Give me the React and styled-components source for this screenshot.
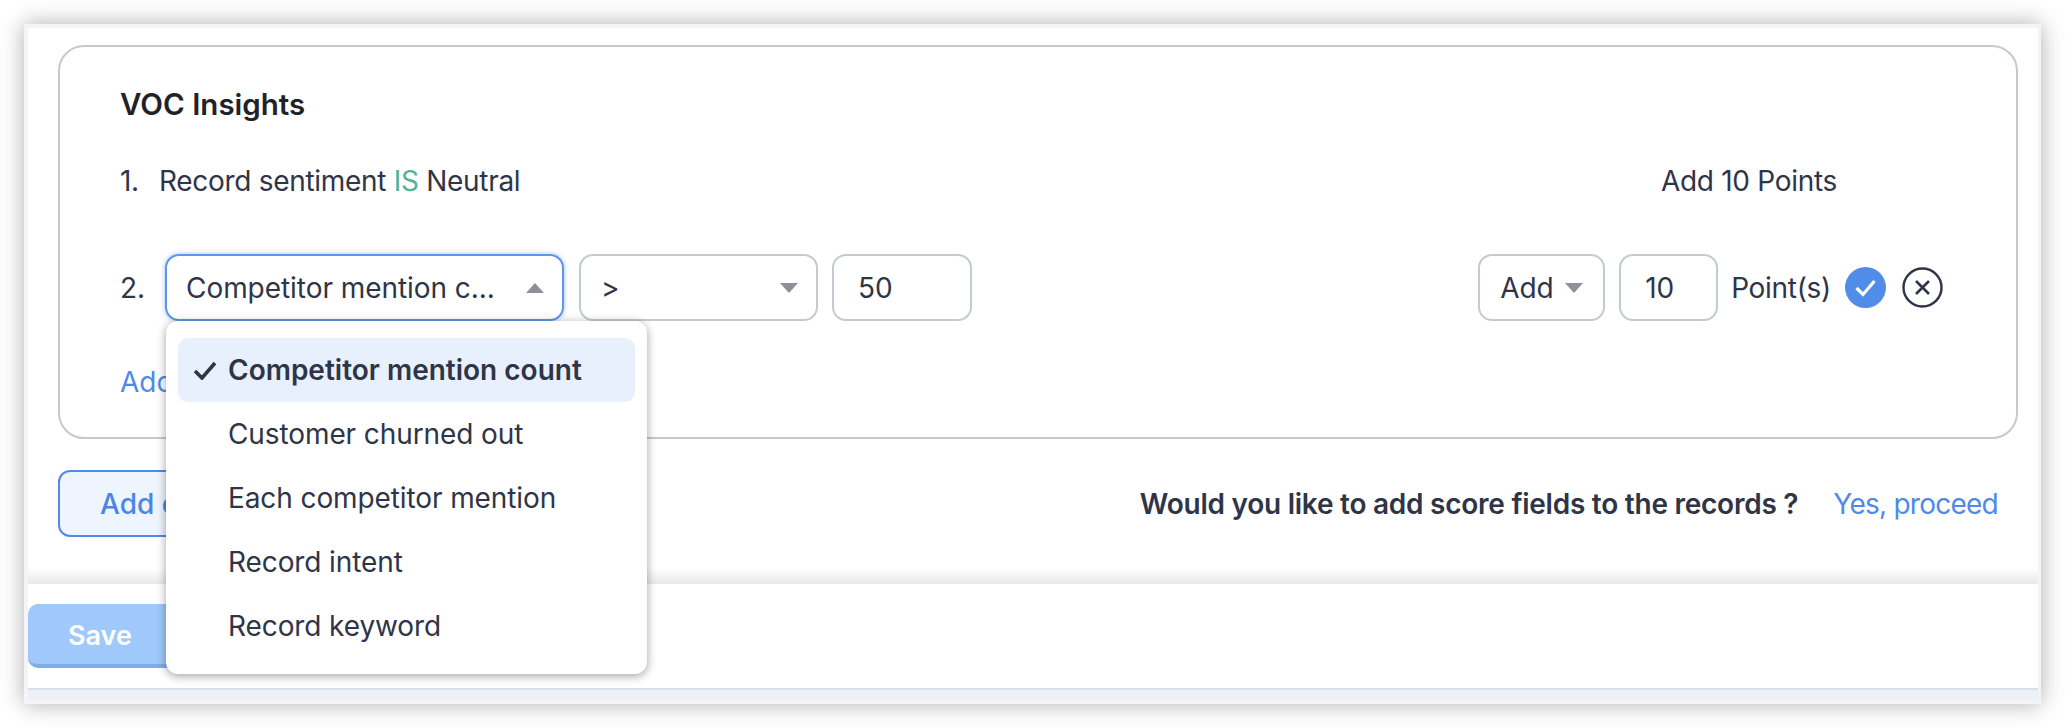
import React from 'react';
import styled, { createGlobalStyle } from 'styled-components';

const GlobalStyle = createGlobalStyle`
  html, body {
    margin: 0;
    padding: 0;
    background: #fff;
    font-family: "Inter", "Noto Sans", sans-serif;
    color: #2f3547;
  }
`;

const Page = styled.div`
  width: 2066px;
  height: 728px;
  padding: 24px 25px 24px 24px;
  box-sizing: border-box;
  overflow: hidden;
`;

const Frame = styled.div`
  height: 680px;
  box-sizing: border-box;
  padding: 4px 3px 4px 4px;
  background: #f4f4f4;
  box-shadow: 0 0 22px rgba(0, 0, 0, 0.32);
  display: flex;
  flex-direction: column;
`;

const Body = styled.div`
  height: 556px;
  box-sizing: border-box;
  padding: 17px 20px 0 30px;
  background: #fff;
  position: relative;
  &::after {
    content: '';
    position: absolute;
    left: 0;
    right: 0;
    bottom: 0;
    height: 16px;
    background: linear-gradient(to bottom, rgba(0, 0, 0, 0), rgba(0, 0, 0, 0.09));
  }
`;

const Card = styled.section`
  height: 394px;
  box-sizing: border-box;
  border: 2px solid #c5c9ce;
  border-radius: 26px;
  padding: 37px 73px 0 60px;
`;

const Title = styled.h2`
  margin: 0;
  font-size: 29.5px;
  line-height: 40px;
  font-weight: 600;
  color: #1f2229;
`;

const Row = styled.div`
  display: flex;
  align-items: center;
  height: ${(p) => p.$height}px;
  margin-top: ${(p) => p.$top}px;
  font-size: 28px;
  letter-spacing: ${(p) => (p.$tight ? '-0.3px' : '-0.05px')};
`;

const Num = styled.span`
  width: ${(p) => p.$width}px;
  flex: none;
`;

const Sentence = styled.span`
  flex: 1;
`;

const Op = styled.span`
  color: #4fb39c;
`;

const Score = styled.span`
  margin-right: 106px;
`;

const Field = styled.div`
  position: relative;
  flex: none;
  box-sizing: border-box;
  width: ${(p) => p.$width}px;
  height: 67px;
  margin-right: ${(p) => p.$gap || 0}px;
  padding: 0 ${(p) => p.$padRight || 18}px 0 ${(p) => p.$padLeft || 20}px;
  display: flex;
  align-items: center;
  justify-content: space-between;
  background: #fff;
  border: 2px solid ${(p) => (p.$focus ? '#5f96ea' : '#c5cad0')};
  border-radius: 14px;
  box-shadow: ${(p) => (p.$focus ? '0 0 5px rgba(80, 140, 235, 0.55)' : 'none')};
  white-space: nowrap;
`;

const Arrow = styled.i`
  flex: none;
  width: 0;
  height: 0;
  border-left: 9px solid transparent;
  border-right: 9px solid transparent;
  ${(p) => (p.$up ? 'border-bottom' : 'border-top')}: 10px solid #8d9098;
`;

const Spacer = styled.div`
  flex: 1;
`;

const Unit = styled.span`
  margin-right: 14px;
  letter-spacing: -0.3px;
`;

const IconSlot = styled.span`
  display: flex;
  flex: none;
  margin-right: ${(p) => p.$gap || 0}px;
`;

const AddLink = styled.a`
  display: block;
  margin-top: 41px;
  font-size: 28px;
  line-height: 40px;
  color: #4f8ae8;
`;

const ActionRow = styled.div`
  display: flex;
  align-items: center;
  margin-top: 31px;
  height: 67px;
`;

const OutlineButton = styled.button`
  width: 300px;
  height: 67px;
  box-sizing: border-box;
  padding: 0 0 0 40px;
  text-align: left;
  font: 500 28px "Inter", sans-serif;
  color: #4a86e6;
  background: #eef5fe;
  border: 2px solid #4f8ae8;
  border-radius: 12px;
  white-space: nowrap;
`;

const Question = styled.span`
  margin-left: auto;
  font-size: 28px;
  font-weight: 600;
  letter-spacing: -0.25px;
  color: #2f3547;
`;

const Proceed = styled.a`
  margin-left: 35px;
  margin-right: 20px;
  font-size: 28px;
  letter-spacing: -0.75px;
  color: #4f8ae8;
`;

const Footer = styled.footer`
  height: 106px;
  box-sizing: border-box;
  padding-top: 20px;
  background: #fff;
  border-bottom: 2px solid #d6e0eb;
`;

const SaveButton = styled.button`
  width: 180px;
  height: 64px;
  box-sizing: border-box;
  padding: 2px 0 0 40px;
  text-align: left;
  font: 600 27px "Inter", sans-serif;
  color: #fff;
  background: #9fc9fa;
  border: 0;
  border-bottom: 4px solid #80ade8;
  border-radius: 10px;
`;

const StatusBar = styled.div`
  flex: 1;
  background: #edf0f4;
`;

const Menu = styled.ul`
  position: absolute;
  left: 142px;
  top: 297px;
  z-index: 5;
  width: 481px;
  height: 353px;
  box-sizing: border-box;
  margin: 0;
  padding: 17px 12px;
  list-style: none;
  background: #fff;
  border-radius: 12px;
  box-shadow: 0 2px 10px rgba(0, 0, 0, 0.38);
`;

const Option = styled.li`
  display: flex;
  align-items: center;
  height: 64px;
  padding-left: 50px;
  position: relative;
  font-size: 28px;
  font-weight: ${(p) => (p.$selected ? 600 : 400)};
  letter-spacing: ${(p) => (p.$selected ? '0' : '-0.1px')};
  background: ${(p) => (p.$selected ? '#e9f0fd' : 'transparent')};
  border-radius: 10px;
  white-space: nowrap;
`;

const Tick = styled.svg`
  position: absolute;
  left: 15px;
  top: 22px;
`;

const Wrap = styled.div`
  position: relative;
`;

const OPTIONS = [
  'Competitor mention count',
  'Customer churned out',
  'Each competitor mention',
  'Record intent',
  'Record keyword',
];

const App = () => (
  <Page>
    <GlobalStyle />
    <Wrap>
      <Frame>
        <Body>
          <Card>
            <Title>VOC Insights</Title>
            <Row $height={40} $top={37} $tight>
              <Num $width={39}>1.</Num>
              <Sentence>
                Record sentiment <Op>IS</Op> Neutral
              </Sentence>
              <Score>Add 10 Points</Score>
            </Row>
            <Row $height={67} $top={53}>
              <Num $width={45}>2.</Num>
              <Field $width={399} $gap={15} $focus $padLeft={19}>
                Competitor mention c...
                <Arrow $up />
              </Field>
              <Field $width={239} $gap={14}>
                &gt;
                <Arrow />
              </Field>
              <Field $width={140} $padLeft={24}>50</Field>
              <Spacer />
              <Field $width={127} $gap={14} $padRight={20}>
                Add
                <Arrow />
              </Field>
              <Field $width={99} $gap={13} $padLeft={24}>10</Field>
              <Unit>Point(s)</Unit>
              <IconSlot $gap={16}>
                <svg width="41" height="41" viewBox="0 0 41 41">
                  <circle cx="20.5" cy="20.5" r="20.5" fill="#528ce9" />
                  <path d="M11.5 21l6.5 6.5L29.5 14" fill="none" stroke="#fff" strokeWidth="3.2" />
                </svg>
              </IconSlot>
              <IconSlot>
                <svg width="41" height="41" viewBox="0 0 41 41">
                  <circle cx="20.5" cy="20.5" r="19" fill="none" stroke="#2f3547" strokeWidth="2.4" />
                  <path d="M14 14l13 13M27 14L14 27" fill="none" stroke="#2f3547" strokeWidth="2.6" />
                </svg>
              </IconSlot>
            </Row>
            <AddLink>Add</AddLink>
          </Card>
          <ActionRow>
            <OutlineButton>Add c</OutlineButton>
            <Question>Would you like to add score fields to the records ?</Question>
            <Proceed>Yes, proceed</Proceed>
          </ActionRow>
        </Body>
        <Footer>
          <SaveButton>Save</SaveButton>
        </Footer>
        <StatusBar />
      </Frame>
      <Menu>
        {OPTIONS.map((label, i) => (
          <Option key={label} $selected={i === 0}>
            {i === 0 && (
              <Tick width="24" height="20" viewBox="0 0 24 20">
                <path d="M2 11l7 7L22 3" fill="none" stroke="#2f3547" strokeWidth="3.6" />
              </Tick>
            )}
            {label}
          </Option>
        ))}
      </Menu>
    </Wrap>
  </Page>
);

export default App;
